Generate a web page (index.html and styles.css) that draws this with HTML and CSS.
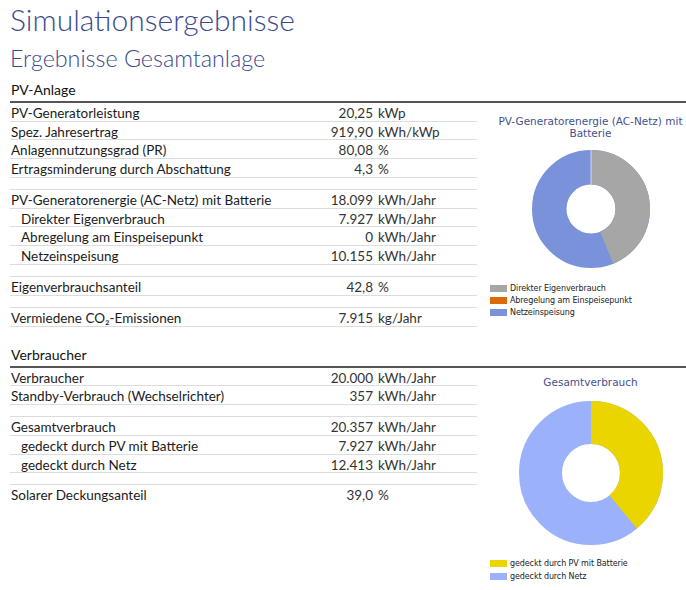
FILE: index.html
```html
<!DOCTYPE html>
<html lang="de">
<head>
<meta charset="utf-8">
<title>Simulationsergebnisse</title>
<link rel="stylesheet" href="styles.css">
</head>
<body>
<div class="page">
  <h1 class="title">Simulationsergebnisse</h1>
  <h2 class="subtitle">Ergebnisse Gesamtanlage</h2>

  <section class="sec sec-pv">
    <h3 class="sec-head">PV-Anlage</h3>
    <div class="sec-body">
      <div class="table">
        <div class="row"><span class="lbl">PV-Generatorleistung</span><span class="val">20,25</span><span class="unit">kWp</span></div>
        <div class="row"><span class="lbl">Spez. Jahresertrag</span><span class="val">919,90</span><span class="unit">kWh/kWp</span></div>
        <div class="row"><span class="lbl">Anlagennutzungsgrad (PR)</span><span class="val">80,08</span><span class="unit">%</span></div>
        <div class="row"><span class="lbl">Ertragsminderung durch Abschattung</span><span class="val">4,3</span><span class="unit">%</span></div>
        <div class="spacer"></div>
        <div class="row"><span class="lbl">PV-Generatorenergie (AC-Netz) mit Batterie</span><span class="val">18.099</span><span class="unit">kWh/Jahr</span></div>
        <div class="row sub"><span class="lbl">Direkter Eigenverbrauch</span><span class="val">7.927</span><span class="unit">kWh/Jahr</span></div>
        <div class="row sub"><span class="lbl">Abregelung am Einspeisepunkt</span><span class="val">0</span><span class="unit">kWh/Jahr</span></div>
        <div class="row sub"><span class="lbl">Netzeinspeisung</span><span class="val">10.155</span><span class="unit">kWh/Jahr</span></div>
        <div class="spacer"></div>
        <div class="row"><span class="lbl">Eigenverbrauchsanteil</span><span class="val">42,8</span><span class="unit">%</span></div>
        <div class="spacer"></div>
        <div class="row"><span class="lbl">Vermiedene CO₂-Emissionen</span><span class="val">7.915</span><span class="unit">kg/Jahr</span></div>
      </div>
      <div class="chart chart-pv">
        <div class="chart-title">PV-Generatorenergie (AC-Netz) mit<br>Batterie</div>
        <svg class="donut donut-pv" width="120" height="120" viewBox="0 0 120 120">
          <circle cx="60" cy="60" r="41.75" fill="none" stroke="#7a92da" stroke-width="34.5"/>
          <circle cx="60" cy="60" r="41.75" fill="none" stroke="#a6a6a6" stroke-width="34.5"
                  stroke-dasharray="114.9 300" transform="rotate(-90 60 60)"/>
          <line x1="60" y1="1" x2="60" y2="35.5" stroke="#fff" stroke-width="0.6"/>
        </svg>
        <ul class="legend">
          <li><span class="sw sw-grey"></span>Direkter Eigenverbrauch</li>
          <li><span class="sw sw-orange"></span>Abregelung am Einspeisepunkt</li>
          <li><span class="sw sw-blue"></span>Netzeinspeisung</li>
        </ul>
      </div>
    </div>
  </section>

  <section class="sec sec-vb">
    <h3 class="sec-head">Verbraucher</h3>
    <div class="sec-body">
      <div class="table">
        <div class="row"><span class="lbl">Verbraucher</span><span class="val">20.000</span><span class="unit">kWh/Jahr</span></div>
        <div class="row"><span class="lbl">Standby-Verbrauch (Wechselrichter)</span><span class="val">357</span><span class="unit">kWh/Jahr</span></div>
        <div class="spacer"></div>
        <div class="row"><span class="lbl">Gesamtverbrauch</span><span class="val">20.357</span><span class="unit">kWh/Jahr</span></div>
        <div class="row sub"><span class="lbl">gedeckt durch PV mit Batterie</span><span class="val">7.927</span><span class="unit">kWh/Jahr</span></div>
        <div class="row sub"><span class="lbl">gedeckt durch Netz</span><span class="val">12.413</span><span class="unit">kWh/Jahr</span></div>
        <div class="spacer"></div>
        <div class="row last"><span class="lbl">Solarer Deckungsanteil</span><span class="val">39,0</span><span class="unit">%</span></div>
      </div>
      <div class="chart chart-vb">
        <div class="chart-title">Gesamtverbrauch</div>
        <svg class="donut donut-vb" width="146" height="146" viewBox="0 0 146 146">
          <circle cx="73" cy="73" r="50.5" fill="none" stroke="#9bb2fb" stroke-width="43"/>
          <circle cx="73" cy="73" r="50.5" fill="none" stroke="#ebd500" stroke-width="43"
                  stroke-dasharray="123.6 400" transform="rotate(-90 73 73)"/>
        </svg>
        <ul class="legend">
          <li><span class="sw sw-yellow"></span>gedeckt durch PV mit Batterie</li>
          <li><span class="sw sw-lblue"></span>gedeckt durch Netz</li>
        </ul>
      </div>
    </div>
  </section>
</div>
</body>
</html>
```

FILE: styles.css
```css
html, body {
  margin: 0;
  padding: 0;
  background: #fff;
}
body {
  font-family: Lato, "Open Sans", sans-serif;
  color: #1b1b1b;
}
.page {
  width: 686px;
  height: 590px;
  overflow: hidden;
  padding-left: 10px;
  box-sizing: border-box;
}
.title {
  margin: 0;
  font-weight: 300;
  font-size: 30px;
  line-height: 36px;
  color: #3b4a8e;
  padding-top: 1px;
}
.subtitle {
  margin: 0;
  font-weight: 300;
  font-size: 23.3px;
  line-height: 28px;
  color: #3b4a8e;
  padding-top: 7px;
}
.sec-head {
  margin: 0;
  font-weight: 400;
  font-size: 14px;
  line-height: 17px;
  padding-top: 9px;
  padding-bottom: 3px;
  padding-left: 1px;
  border-bottom: 2px solid #555;
  color: #111;
}
.sec-vb {
  margin-top: 10px;
}
.sec-body {
  display: flex;
  align-items: flex-start;
}
.table {
  width: 467px;
  flex: none;
  font-size: 13.5px;
}
.row {
  display: grid;
  grid-template-columns: 1fr 80px 104px;
  height: 18.67px;
  padding-top: 3px;
  line-height: 14.67px;
  border-bottom: 1px solid #dcdcdc;
  box-sizing: border-box;
}
.row.last {
  border-bottom: none;
}
.lbl {
  padding-left: 1px;
  white-space: nowrap;
}
.row.sub .lbl {
  padding-left: 11px;
}
.val {
  text-align: right;
  color: #333;
}
.unit {
  padding-left: 5px;
  color: #333;
}
.spacer {
  height: 12.33px;
  border-bottom: 1px solid #dcdcdc;
  box-sizing: border-box;
}
.chart {
  flex: 1;
  margin-left: 18px;
  display: flex;
  flex-direction: column;
  align-items: center;
  font-family: "DejaVu Sans", Verdana, sans-serif;
}
.chart-title {
  color: #45508e;
  font-size: 10.5px;
  line-height: 12px;
  text-align: center;
}
.chart-pv .chart-title {
  margin-top: 12px;
}
.chart-vb .chart-title {
  margin-top: 8px;
}
.donut {
  display: block;
}
.donut-pv {
  margin-top: 10px;
}
.donut-vb {
  margin-top: 12px;
}
.legend {
  list-style: none;
  margin: 0 0 0 -5px;
  padding: 0;
  align-self: flex-start;
  font-size: 8px;
  letter-spacing: -0.1px;
  color: #222;
}
.chart-pv .legend {
  margin-top: 13px;
}
.chart-vb .legend {
  margin-top: 12px;
}
.chart-vb .legend li {
  height: 12.7px;
}
.legend li {
  display: flex;
  align-items: center;
  height: 12px;
  white-space: nowrap;
}
.sw {
  width: 17px;
  height: 7px;
  margin-right: 3px;
  flex: none;
}
.sw-grey { background: #a6a6a6; }
.sw-orange { background: #dc6a0a; }
.sw-blue { background: #7a92da; }
.sw-yellow { background: #ebd500; }
.sw-lblue { background: #9bb2fb; }
```
